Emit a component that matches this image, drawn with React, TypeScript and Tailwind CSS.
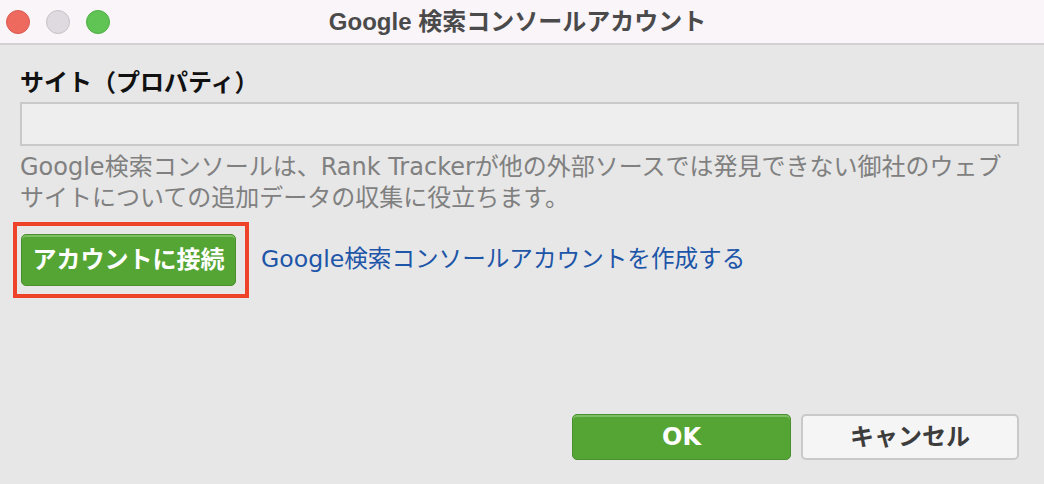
import React from "react";

const jp = '"DejaVu Sans","Noto Sans CJK JP",sans-serif';
const title = '"Liberation Sans","Noto Sans CJK JP",sans-serif';

export default function App() {
  return (
    <div className="w-[1044px] h-[484px] flex flex-col bg-[#e7e7e7] overflow-hidden">
      {/* Title bar */}
      <div className="relative h-[45px] shrink-0 bg-[#f9f5f9] border-b-2 border-[#d4d1d4] flex items-center">
        <div className="flex items-center gap-4 pl-[6px]">
          <div className="w-6 h-6 rounded-full bg-[#ee6a5f] border border-[#d85a4f]" />
          <div className="w-6 h-6 rounded-full bg-[#dedadf] border border-[#c6c2c7]" />
          <div className="w-6 h-6 rounded-full bg-[#5fc454] border border-[#4fae45]" />
        </div>
        <div className="absolute inset-0 flex items-center justify-center pr-[9px]">
          <span className="text-[24px] font-bold text-[#4b4a4b]" style={{ fontFamily: title }}>
            Google 検索コンソールアカウント
          </span>
        </div>
      </div>

      {/* Body */}
      <div className="flex-1 flex flex-col pl-5 pr-[25px] pt-[23px] pb-[24px]" style={{ fontFamily: jp }}>
        <div className="text-[24px] font-bold text-[#111] leading-[30px]">サイト（プロパティ）</div>
        <div className="mt-[4px] h-[44px] bg-[#eeeeee] border-2 border-[#c9c9c9]" />
        <div className="mt-[6px] text-[24px] leading-[31px] text-[#808080] whitespace-nowrap">
          Google検索コンソールは、Rank Trackerが他の外部ソースでは発見できない御社のウェブ
          <br />
          サイトについての追加データの収集に役立ちます。
        </div>

        <div className="mt-[8px] flex items-center">
          <div className="-ml-[7px] border-4 border-[#ee4329] pl-[4px] pr-[9px] py-[8px]">
            <div className="w-[215px] h-[52px] rounded-[5px] bg-[#55a535] border border-[#4a8f2e] shadow-[inset_0_2px_0_#7fbf63] flex items-center justify-center text-white font-bold text-[24px]">
              アカウントに接続
            </div>
          </div>
          <span className="ml-[12px] text-[23.6px] text-[#1d55a8]">Google検索コンソールアカウントを作成する</span>
        </div>

        <div className="mt-auto flex justify-end gap-[10px]">
          <div className="w-[219px] h-[46px] rounded-[5px] bg-[#55a535] border border-[#4a8f2e] shadow-[inset_0_2px_0_#7fbf63] flex items-center justify-center text-white font-bold text-[24px]">
            OK
          </div>
          <div className="w-[218px] h-[46px] rounded-[5px] bg-[#f5f5f5] border-2 border-[#c9c9c9] flex items-center justify-center text-[#3c3c3c] font-bold text-[24px]">
            キャンセル
          </div>
        </div>
      </div>
    </div>
  );
}
